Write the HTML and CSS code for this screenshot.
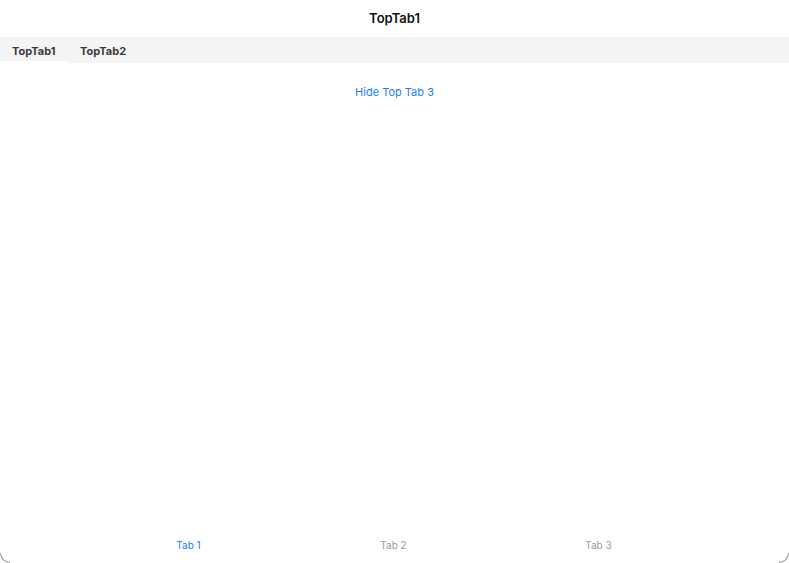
FILE: index.html
```html
<!DOCTYPE html>
<html>
<head>
<meta charset="utf-8">
<link rel="stylesheet" href="styles.css">
</head>
<body>
<div class="app">
  <header class="header">TopTab1</header>
  <nav class="toptabs">
    <div class="toptab active">TopTab1</div>
    <div class="toptab">TopTab2</div>
  </nav>
  <main class="content">
    <a class="link">Hide Top Tab 3</a>
  </main>
  <footer class="tabbar">
    <div class="tabs">
      <div class="tab active">Tab 1</div>
      <div class="tab">Tab 2</div>
      <div class="tab">Tab 3</div>
    </div>
  </footer>
  <div class="corner left"></div>
  <div class="corner right"></div>
</div>
</body>
</html>
```

FILE: styles.css
```css
* { box-sizing: border-box; }
html, body { margin: 0; padding: 0; background: #fff; }
body {
  font-family: Inter, "Noto Sans", "Liberation Sans", sans-serif;
  -webkit-font-smoothing: antialiased;
}
.app {
  position: relative;
  width: 789px;
  height: 563px;
  display: flex;
  flex-direction: column;
  background: #fff;
}
.header {
  height: 37px;
  display: flex;
  align-items: center;
  justify-content: center;
  font-size: 13px;
  font-weight: 600;
  color: #111;
  padding-bottom: 1px;
}
.toptabs {
  height: 26px;
  background: #f4f4f4;
  display: flex;
  align-items: stretch;
}
.toptab {
  display: flex;
  align-items: center;
  padding: 0 12px;
  font-size: 11px;
  font-weight: 700;
  color: #3a3a3a;
  border-bottom: 2px solid transparent;
  padding-top: 4px;
}
.toptab.active {
  width: 68px;
  border-bottom-color: #fff;
}
.content {
  flex: 1;
  display: flex;
  justify-content: center;
  padding-top: 22px;
}
.link {
  font-size: 11px;
  color: #1a7df5;
  height: 14px;
  line-height: 14px;
}
.tabbar {
  height: 36px;
  display: flex;
  justify-content: center;
}
.tabs {
  width: 615px;
  display: flex;
  margin-left: -2px;
}
.tab {
  flex: 1;
  display: flex;
  justify-content: center;
  align-items: center;
  font-size: 10px;
  color: #9a9a9a;
  padding-bottom: 1px;
}
.tab.active { color: #1a7df5; }
.corner {
  position: absolute;
  bottom: 0;
  width: 10px;
  height: 10px;
  border-bottom: 1px solid rgba(60, 60, 60, 0.55);
}
.corner.left {
  left: 0;
  border-left: 1px solid rgba(60, 60, 60, 0.55);
  border-bottom-left-radius: 10px;
}
.corner.right {
  right: 0;
  border-right: 1px solid rgba(60, 60, 60, 0.55);
  border-bottom-right-radius: 10px;
}
```
